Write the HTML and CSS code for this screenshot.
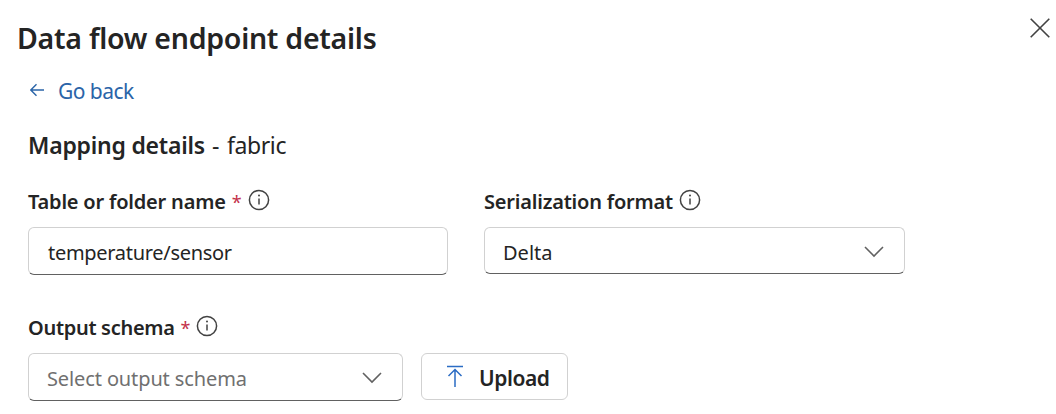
FILE: index.html
```html
<!DOCTYPE html>
<html lang="en">
<head>
<meta charset="utf-8">
<title>Data flow endpoint details</title>
<link rel="stylesheet" href="styles.css">
</head>
<body>
<main class="panel">
  <header class="header">
    <h1 class="title">Data flow endpoint details</h1>
    <button class="close" aria-label="Close"><svg width="20" height="20" viewBox="0 0 20 20"><path d="M.7.7 19.3 19.3M19.3.7.7 19.3"/></svg></button>
  </header>
  <a class="back"><svg class="back-icon" width="14" height="14" viewBox="0 0 14 14"><path d="M14 7H1M6.5 1.2.8 7l5.7 5.8"/></svg><span>Go back</span></a>
  <h2 class="subtitle"><span class="strong">Mapping details</span><span class="dash">-</span><span class="kind">fabric</span></h2>
  <div class="row fields">
    <div class="field table-field">
      <div class="label"><span class="label-table">Table or folder name</span><span class="required">*</span><svg class="info" width="22" height="22" viewBox="0 0 22 22"><circle cx="11" cy="11" r="9.6"/><path d="M11 9.6V15.6"/><circle class="dot" cx="11" cy="6.6" r="1"/></svg></div>
      <div class="input"><span class="value-table">temperature/sensor</span></div>
    </div>
    <div class="field format-field">
      <div class="label"><span class="label-format">Serialization format</span><svg class="info" width="22" height="22" viewBox="0 0 22 22"><circle cx="11" cy="11" r="9.6"/><path d="M11 9.6V15.6"/><circle class="dot" cx="11" cy="6.6" r="1"/></svg></div>
      <div class="input select short"><span class="value-format">Delta</span><svg class="chevron" width="20" height="12" viewBox="0 0 20 12"><path d="m1 1 9 9 9-9"/></svg></div>
    </div>
  </div>
  <div class="field schema">
    <div class="label"><span class="label-schema">Output schema</span><span class="required">*</span><svg class="info" width="22" height="22" viewBox="0 0 22 22"><circle cx="11" cy="11" r="9.6"/><path d="M11 9.6V15.6"/><circle class="dot" cx="11" cy="6.6" r="1"/></svg></div>
    <div class="row controls">
      <div class="input select schema-select"><span class="placeholder">Select output schema</span><svg class="chevron" width="20" height="12" viewBox="0 0 20 12"><path d="m1 1 9 9 9-9"/></svg></div>
      <button class="upload"><svg class="upload-icon" width="18" height="23" viewBox="0 0 18 23"><path d="M1 1.5h16M9 22V5M2.5 11 9 4.5l6.5 6.5"/></svg><span class="upload-text">Upload</span></button>
    </div>
  </div>
</main>
</body>
</html>
```
FILE: styles.css
```css
* { box-sizing: border-box; }
body { margin: 0; background: #fff; color: #242424; font-family: "Noto Sans", "Open Sans", sans-serif; overflow: hidden; }
svg { fill: none; flex: none; display: block; }
span { white-space: nowrap; }
button { font: inherit; color: inherit; background: #fff; border: 0; padding: 0; }
.panel { width: 1056px; height: 414px; padding: 18px 6px 0 17px; }
.header { display: flex; justify-content: space-between; align-items: flex-start; height: 59px; }
.title { margin: 1px 0 0; font-size: 28.5px; line-height: 38px; font-weight: 600; letter-spacing: -0.26px; }
.close svg { stroke: #424242; stroke-width: 1.6; }
.back { display: flex; align-items: center; gap: 14px; margin-left: 13px; height: 28px; font-size: 21px; line-height: 28px; color: #2a64a8; letter-spacing: -0.55px; }
.back-icon { stroke: #2a64a8; stroke-width: 1.4; margin-top: -2px; }
.subtitle { display: flex; margin: 24px 0 0 11px; font-size: 23px; line-height: 32px; font-weight: 400; letter-spacing: -0.38px; }
.strong { font-weight: 600; letter-spacing: -0.22px; }
.dash { margin: 0 8px 0 7px; }
.row { display: flex; }
.fields { margin: 26px 0 0 11px; gap: 36px; }
.table-field { width: 420px; }
.format-field { width: 421px; }
.label { display: flex; height: 28px; margin-bottom: 12px; font-size: 20px; line-height: 30px; font-weight: 600; letter-spacing: -0.2px; }
.label-schema { letter-spacing: -0.3px; }
.required { color: #c4314b; font-weight: 400; font-size: 18px; margin-left: 6px; }
.info { margin: 2px 0 0 7px; stroke: #424242; stroke-width: 1.5; }
.info .dot { fill: #424242; stroke: none; }
.label-format + .info { margin-left: 6px; }
.schema .info { margin-left: 6px; }
.input { display: flex; align-items: center; height: 48px; padding: 2px 20px 0 18px; border: 1px solid #d1d1d1; border-bottom-color: #616161; border-radius: 6px; font-size: 20px; line-height: 28px; letter-spacing: -0.3px; }
.input span { padding-top: 2px; }
.value-table { margin-left: 1px; }
.value-format { letter-spacing: 0; }
.select { justify-content: space-between; }
.short { height: 47px; }
.chevron { stroke: #616161; stroke-width: 1.6; }
.schema { margin: 38px 0 0 11px; }
.controls { gap: 18px; }
.schema-select { width: 375px; }
.placeholder { color: #707070; letter-spacing: -0.12px; }
.upload { display: flex; align-items: center; width: 147px; height: 47px; padding-left: 24px; gap: 15px; border: 1px solid #d1d1d1; border-radius: 6px; font-size: 21px; line-height: 28px; font-weight: 600; letter-spacing: -0.45px; }
.upload-text { padding-top: 3px; }
.upload-icon { stroke: #2b6cc4; stroke-width: 1.5; }
```
